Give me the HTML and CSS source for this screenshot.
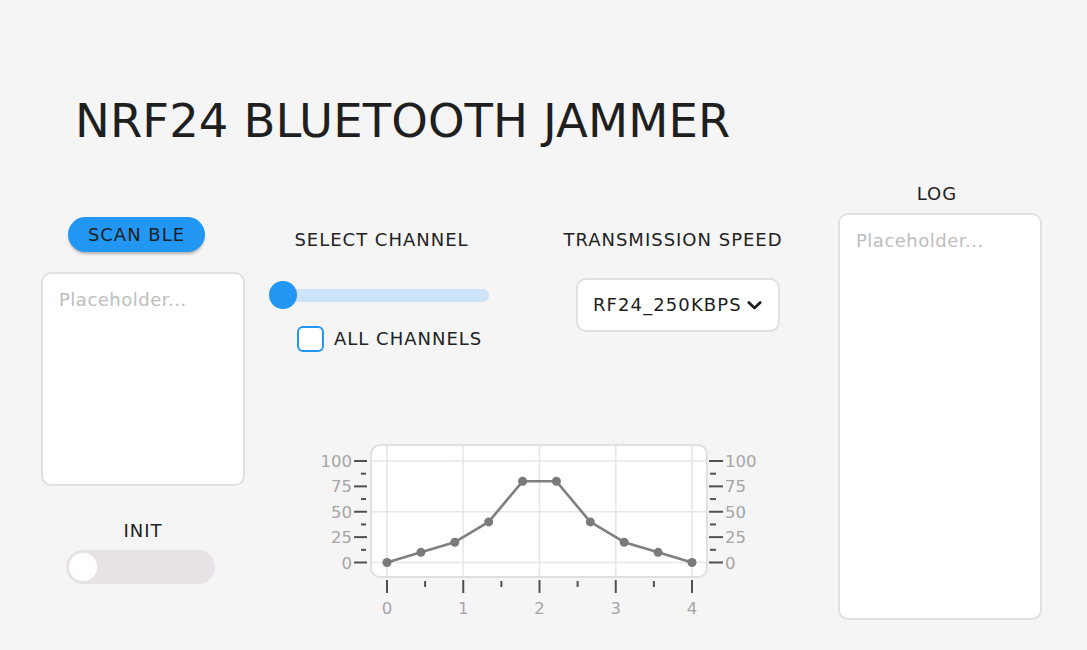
FILE: index.html
```html
<!DOCTYPE html>
<html lang="en">
<head>
<meta charset="utf-8">
<title>NRF24 Bluetooth Jammer</title>
<link rel="stylesheet" href="styles.css">
</head>
<body>
<div class="screen">
  <h1 class="title">NRF24 BLUETOOTH JAMMER</h1>
  <div class="main">
    <div class="col-left">
      <button class="btn-scan">SCAN BLE</button>
      <div class="textarea ta-scan"><span class="placeholder">Placeholder...</span></div>
      <div class="label label-init">INIT</div>
      <div class="switch"><span class="switch-knob"></span></div>
    </div>
    <div class="col-mid">
      <div class="mid-top">
        <div class="col-channel">
          <div class="label label-channel">SELECT CHANNEL</div>
          <div class="slider">
            <div class="slider-track"></div>
            <span class="slider-knob"></span>
          </div>
          <div class="check-row">
            <span class="checkbox"></span>
            <span class="label">ALL CHANNELS</span>
          </div>
        </div>
        <div class="col-speed">
          <div class="label label-speed">TRANSMISSION SPEED</div>
          <div class="dropdown">
            <span class="dropdown-text">RF24_250KBPS</span>
            <svg class="chevron" width="15" height="9" viewBox="0 0 15 9"><polyline points="1.8,1.6 7.5,7 13.2,1.6" fill="none" stroke="#1e1e1e" stroke-width="2.8" stroke-linecap="round" stroke-linejoin="round"/></svg>
          </div>
        </div>
      </div>
      <svg class="chart" width="460" height="182" viewBox="0 0 460 182">
        <rect x="56" y="5" width="336" height="132" rx="9" fill="#ffffff" stroke="#e2dfe2" stroke-width="2"/>
        <g stroke="#e8e6e8" stroke-width="1.6">
          <line x1="72" y1="6" x2="72" y2="136"/>
          <line x1="148.25" y1="6" x2="148.25" y2="136"/>
          <line x1="224.5" y1="6" x2="224.5" y2="136"/>
          <line x1="300.75" y1="6" x2="300.75" y2="136"/>
          <line x1="377" y1="6" x2="377" y2="136"/>
          <line x1="57" y1="21" x2="391" y2="21"/>
          <line x1="57" y1="71.75" x2="391" y2="71.75"/>
          <line x1="57" y1="122.5" x2="391" y2="122.5"/>
        </g>
        <g stroke="#505050" stroke-width="2">
          <line x1="39" y1="21" x2="52" y2="21"/>
          <line x1="39" y1="46.375" x2="52" y2="46.375"/>
          <line x1="39" y1="71.75" x2="52" y2="71.75"/>
          <line x1="39" y1="97.125" x2="52" y2="97.125"/>
          <line x1="39" y1="122.5" x2="52" y2="122.5"/>
          <line x1="46" y1="33.69" x2="51" y2="33.69"/>
          <line x1="46" y1="59.06" x2="51" y2="59.06"/>
          <line x1="46" y1="84.44" x2="51" y2="84.44"/>
          <line x1="46" y1="109.81" x2="51" y2="109.81"/>
          <line x1="394" y1="21" x2="408" y2="21"/>
          <line x1="394" y1="46.375" x2="408" y2="46.375"/>
          <line x1="394" y1="71.75" x2="408" y2="71.75"/>
          <line x1="394" y1="97.125" x2="408" y2="97.125"/>
          <line x1="394" y1="122.5" x2="408" y2="122.5"/>
          <line x1="395" y1="33.69" x2="401" y2="33.69"/>
          <line x1="395" y1="59.06" x2="401" y2="59.06"/>
          <line x1="395" y1="84.44" x2="401" y2="84.44"/>
          <line x1="395" y1="109.81" x2="401" y2="109.81"/>
          <line x1="72" y1="140" x2="72" y2="153"/>
          <line x1="148.25" y1="140" x2="148.25" y2="153"/>
          <line x1="224.5" y1="140" x2="224.5" y2="153"/>
          <line x1="300.75" y1="140" x2="300.75" y2="153"/>
          <line x1="377" y1="140" x2="377" y2="153"/>
          <line x1="110.1" y1="141" x2="110.1" y2="147"/>
          <line x1="186.4" y1="141" x2="186.4" y2="147"/>
          <line x1="262.6" y1="141" x2="262.6" y2="147"/>
          <line x1="338.9" y1="141" x2="338.9" y2="147"/>
        </g>
        <g class="axis-text" text-anchor="end">
          <text x="37" y="27">100</text>
          <text x="37" y="52.4">75</text>
          <text x="37" y="77.75">50</text>
          <text x="37" y="103.1">25</text>
          <text x="37" y="128.5">0</text>
        </g>
        <g class="axis-text" text-anchor="start">
          <text x="410" y="27">100</text>
          <text x="410" y="52.4">75</text>
          <text x="410" y="77.75">50</text>
          <text x="410" y="103.1">25</text>
          <text x="410" y="128.5">0</text>
        </g>
        <g class="axis-text" text-anchor="middle">
          <text x="72" y="174">0</text>
          <text x="148.25" y="174">1</text>
          <text x="224.5" y="174">2</text>
          <text x="300.75" y="174">3</text>
          <text x="377" y="174">4</text>
        </g>
        <polyline points="72,122.5 105.9,112.35 139.8,102.2 173.7,81.9 207.6,41.3 241.4,41.3 275.3,81.9 309.2,102.2 343.1,112.35 377,122.5" fill="none" stroke="#7f7f7f" stroke-width="2.6" stroke-linejoin="round"/>
        <g fill="#7a7a7a">
          <circle cx="72" cy="122.5" r="4.5"/>
          <circle cx="105.9" cy="112.35" r="4.5"/>
          <circle cx="139.8" cy="102.2" r="4.5"/>
          <circle cx="173.7" cy="81.9" r="4.5"/>
          <circle cx="207.6" cy="41.3" r="4.5"/>
          <circle cx="241.4" cy="41.3" r="4.5"/>
          <circle cx="275.3" cy="81.9" r="4.5"/>
          <circle cx="309.2" cy="102.2" r="4.5"/>
          <circle cx="343.1" cy="112.35" r="4.5"/>
          <circle cx="377" cy="122.5" r="4.5"/>
        </g>
      </svg>
    </div>
    <div class="col-log">
      <div class="label label-log">LOG</div>
      <div class="textarea ta-log"><span class="placeholder">Placeholder...</span></div>
    </div>
  </div>
</div>
</body>
</html>
```
FILE: styles.css
```css
html, body {
  margin: 0;
  padding: 0;
}
body {
  background: #f5f5f5;
  font-family: "DejaVu Sans", "Liberation Sans", sans-serif;
  color: #222222;
  width: 1087px;
  height: 650px;
  overflow: hidden;
}
.screen {
  display: flex;
  flex-direction: column;
}
.title {
  margin: 0 0 0 75px;
  padding-top: 98px;
  font-size: 46.5px;
  line-height: 46px;
  font-weight: normal;
  color: #1f1f1f;
  letter-spacing: 0.1px;
}
.main {
  display: flex;
  align-items: flex-start;
  margin-top: 36px;
  padding-left: 41px;
}
.label {
  font-size: 18px;
  line-height: 18px;
  letter-spacing: 1px;
  color: #222222;
  white-space: nowrap;
}

/* left column */
.col-left {
  width: 204px;
  display: flex;
  flex-direction: column;
}
.btn-scan {
  margin: 37px 0 0 27px;
  width: 137px;
  height: 35px;
  border: none;
  border-radius: 18px;
  background: #2196f3;
  color: #1e1e1e;
  font-family: inherit;
  font-size: 18px;
  line-height: 18px;
  letter-spacing: 1px;
  padding: 0;
  display: flex;
  align-items: center;
  justify-content: center;
  box-shadow: 0 3px 3px -1px rgba(0, 0, 0, 0.28);
}
.textarea {
  box-sizing: border-box;
  width: 204px;
  background: #ffffff;
  border: 2px solid #e2dfe2;
  border-radius: 10px;
  padding: 17px 16px 16px 16px;
}
.placeholder {
  display: block;
  font-size: 18px;
  line-height: 18px;
  letter-spacing: 0.5px;
  color: #bdbdbd;
  white-space: nowrap;
}
.ta-scan {
  margin-top: 20px;
  height: 214px;
}
.label-init {
  margin-top: 36px;
  text-align: center;
}
.switch {
  margin: 10px 0 0 25px;
  width: 149px;
  height: 34px;
  border-radius: 17px;
  background: #e6e2e6;
  display: flex;
  align-items: center;
  padding-left: 3px;
  box-sizing: border-box;
}
.switch-knob {
  width: 28px;
  height: 28px;
  border-radius: 50%;
  background: #ffffff;
}

/* middle */
.col-mid {
  margin-left: 25px;
  display: flex;
  flex-direction: column;
}
.mid-top {
  display: flex;
  align-items: flex-start;
}
.col-channel {
  width: 219px;
  display: flex;
  flex-direction: column;
}
.label-channel {
  margin-top: 51px;
  text-align: center;
  padding-left: 4px;
}
.slider {
  position: relative;
  margin-top: 32px;
  height: 28px;
  display: flex;
  align-items: center;
}
.slider-track {
  width: 100%;
  height: 13px;
  border-radius: 7px;
  background: #cde3f7;
}
.slider-knob {
  position: absolute;
  left: -1px;
  top: 0;
  width: 28px;
  height: 28px;
  border-radius: 50%;
  background: #2196f3;
}
.check-row {
  margin-top: 17px;
  padding-left: 27px;
  display: flex;
  align-items: center;
  gap: 10px;
}
.checkbox {
  box-sizing: border-box;
  width: 27px;
  height: 26px;
  border: 2px solid #2196f3;
  border-radius: 6px;
  background: #ffffff;
}
.col-speed {
  margin-left: 74px;
  width: 220px;
  display: flex;
  flex-direction: column;
}
.label-speed {
  margin-top: 51px;
  text-align: center;
}
.dropdown {
  box-sizing: border-box;
  margin: 29px 0 0 13px;
  width: 204px;
  height: 54px;
  background: #ffffff;
  border: 2px solid #e2dfe2;
  border-radius: 10px;
  padding: 0 16px 0 15px;
  display: flex;
  align-items: center;
  justify-content: space-between;
}
.dropdown-text {
  font-size: 18px;
  line-height: 18px;
  letter-spacing: 1.1px;
  color: #1e1e1e;
  white-space: nowrap;
}
.chevron {
  display: block;
}
.chart {
  display: block;
  margin: 88px 0 0 45px;
}
.axis-text {
  font-family: "DejaVu Sans", sans-serif;
  font-size: 16.5px;
  fill: #a5a5a5;
}

/* log */
.col-log {
  margin-left: 55px;
  width: 204px;
  display: flex;
  flex-direction: column;
}
.label-log {
  margin-top: 5px;
  text-align: center;
  padding-right: 6px;
}
.ta-log {
  margin-top: 10px;
  height: 407px;
}
```
